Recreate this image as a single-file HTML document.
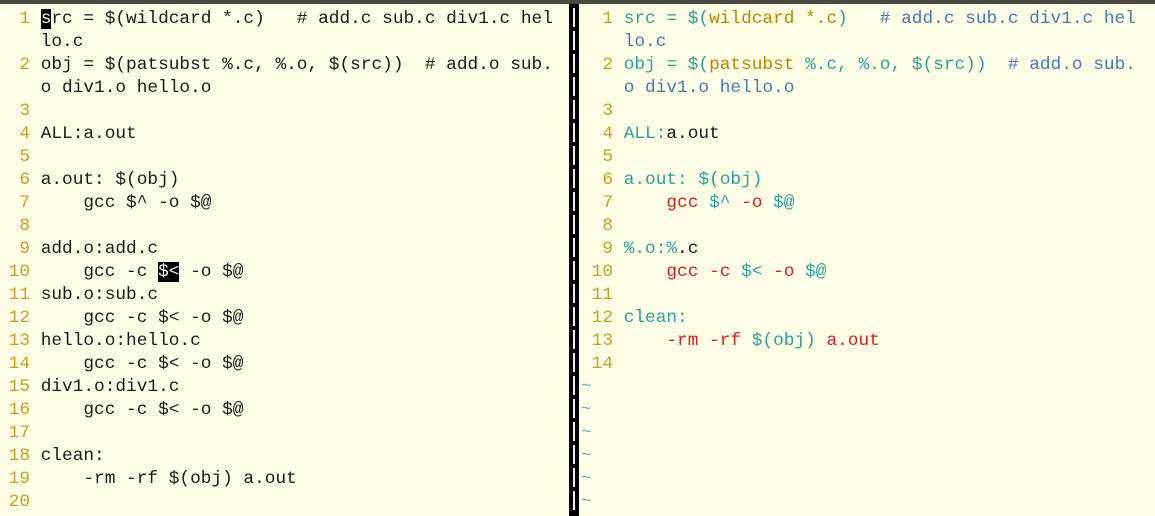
<!DOCTYPE html>
<html><head><meta charset="utf-8"><style>
html,body{margin:0;padding:0;width:1155px;height:516px;overflow:hidden;background:#fefde6;}
.top{position:absolute;left:0;top:0;width:1155px;height:4px;background:#4a4843;}
pre{position:absolute;top:8px;margin:0;font-family:"Liberation Mono",monospace;font-size:17.8px;line-height:23px;color:#1a1a1a;white-space:pre;}
.n{color:#c5a028;}
.t{color:#2aa198;}
.y{color:#b58900;}
.b{color:#4679b3;}
.r{color:#d02020;}
.tl{color:#7fa0d0;}
.cur{background:#000;color:#fefde6;}
.sep{position:absolute;left:569px;top:4px;width:10px;height:512px;background:#000;}
.bar{position:absolute;left:573px;width:2px;background:#e8f0f4;}
</style></head><body>
<div class="top"></div>
<pre style="left:-2px"><span class="n">  1 </span><span class="cur">s</span>rc = $(wildcard *.c)   # add.c sub.c div1.c hel
    lo.c
<span class="n">  2 </span>obj = $(patsubst %.c, %.o, $(src))  # add.o sub.
    o div1.o hello.o
<span class="n">  3 </span>
<span class="n">  4 </span>ALL:a.out
<span class="n">  5 </span>
<span class="n">  6 </span>a.out: $(obj)
<span class="n">  7 </span>    gcc $^ -o $@
<span class="n">  8 </span>
<span class="n">  9 </span>add.o:add.c
<span class="n"> 10 </span>    gcc -c <span class="cur">$&lt;</span> -o $@
<span class="n"> 11 </span>sub.o:sub.c
<span class="n"> 12 </span>    gcc -c $&lt; -o $@
<span class="n"> 13 </span>hello.o:hello.c
<span class="n"> 14 </span>    gcc -c $&lt; -o $@
<span class="n"> 15 </span>div1.o:div1.c
<span class="n"> 16 </span>    gcc -c $&lt; -o $@
<span class="n"> 17 </span>
<span class="n"> 18 </span>clean:
<span class="n"> 19 </span>    -rm -rf $(obj) a.out
<span class="n"> 20 </span></pre>
<div class="sep"></div>
<div id="bars"></div>
<pre style="left:581px"><span class="n">  1 </span><span class="t">src = $(</span><span class="y">wildcard *.c</span><span class="t">)</span>   <span class="b"># add.c sub.c div1.c hel</span>
    <span class="b">lo.c</span>
<span class="n">  2 </span><span class="t">obj = $(</span><span class="y">patsubst</span><span class="t"> %.c, %.o, $(src))</span>  <span class="b"># add.o sub.</span>
    <span class="b">o div1.o hello.o</span>
<span class="n">  3 </span>
<span class="n">  4 </span><span class="t">ALL:</span>a.out
<span class="n">  5 </span>
<span class="n">  6 </span><span class="t">a.out: $(obj)</span>
<span class="n">  7 </span>    <span class="r">gcc </span><span class="t">$^</span><span class="r"> -o </span><span class="t">$@</span>
<span class="n">  8 </span>
<span class="n">  9 </span><span class="t">%.o:%</span>.c
<span class="n"> 10 </span>    <span class="r">gcc -c </span><span class="t">$&lt;</span><span class="r"> -o </span><span class="t">$@</span>
<span class="n"> 11 </span>
<span class="n"> 12 </span><span class="t">clean:</span>
<span class="n"> 13 </span>    <span class="r">-rm -rf </span><span class="t">$(obj)</span><span class="r"> a.out</span>
<span class="n"> 14 </span>
<span class="tl">~</span>
<span class="tl">~</span>
<span class="tl">~</span>
<span class="tl">~</span>
<span class="tl">~</span>
<span class="tl">~</span></pre>
<script>
var h='';for(var i=0;i<22;i++){h+='<div class="bar" style="top:'+(8+i*23)+'px;height:19px"></div>';}
document.getElementById('bars').innerHTML=h;
</script>
</body></html>
